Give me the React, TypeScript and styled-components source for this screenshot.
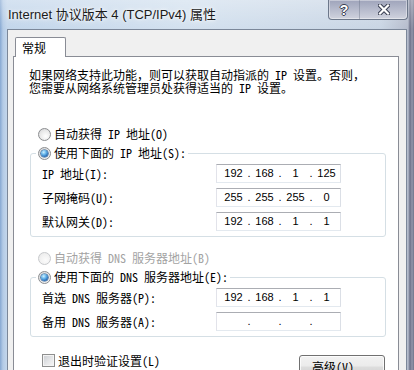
import React from "react";
import styled, { createGlobalStyle } from "styled-components";

const GlobalStyle = createGlobalStyle`
  html, body {
    margin: 0;
    padding: 0;
  }
  body {
    width: 414px;
    height: 370px;
    overflow: hidden;
    background: #fff;
  }
`;

const uiFont = `"Noto Sans Mono CJK SC", "Noto Sans CJK SC", sans-serif`;

const Window = styled.div`
  width: 414px;
  height: 370px;
  display: flex;
  flex-direction: column;
  overflow: hidden;
  box-sizing: border-box;
  background: linear-gradient(
    90deg,
    #86a8d2 0px,
    #b4cbe6 3px,
    #c3d6eb 7px,
    #d3e1ef 45%,
    #c9d5e4 92%,
    #b5bccc 408px,
    #6b7088 410px,
    #9396aa 412px,
    #6f748a 414px
  );
  font-family: ${uiFont};
`;

const TitleBar = styled.header`
  height: 29px;
  flex: none;
  display: flex;
  align-items: flex-start;
  padding-left: 8px;
  background: linear-gradient(
    180deg,
    rgba(255, 255, 255, 0.3) 0%,
    rgba(255, 255, 255, 0.1) 65%,
    rgba(255, 255, 255, 0) 100%
  );
`;

const Title = styled.h1`
  margin: 0;
  padding-top: 7px;
  font: 400 13px/16px "Liberation Sans", "Noto Sans CJK SC", sans-serif;
  color: #1b1b1b;
  text-shadow: 0 0 6px rgba(255, 255, 255, 0.9), 0 0 3px #fff;
  white-space: nowrap;
`;

const Caption = styled.div`
  margin-left: auto;
  margin-right: 6px;
  display: flex;
  height: 20px;
  box-sizing: border-box;
  border: 1px solid #6c778a;
  border-top: none;
  border-radius: 0 0 4px 4px;
  background: linear-gradient(180deg, #9ea3ba 0%, #b9bdce 55%, #d0d3de 100%);
  box-shadow: inset 0 0 0 1px rgba(255, 255, 255, 0.4);
  overflow: hidden;
`;

const CaptionButton = styled.div<{ $wide?: boolean }>`
  width: ${(p) => (p.$wide ? 47 : 30)}px;
  display: flex;
  align-items: center;
  justify-content: center;
  border-left: ${(p) => (p.$wide ? "1px solid rgba(90, 100, 120, 0.35)" : "none")};
  font: 700 14px/1 "Liberation Sans", sans-serif;
  color: #fff;
  text-shadow: 1px 0 0 #3a3f52, -1px 0 0 #3a3f52, 0 1px 0 #3a3f52, 0 -1px 0 #3a3f52;
`;

const Client = styled.div`
  flex: 1;
  min-height: 0;
  margin: 0 7px;
  display: flex;
  flex-direction: column;
  padding: 7px 7px 0 5px;
  background: #f0f0f0;
  border: 1px solid #7b8799;
  border-bottom: none;
`;

const TabStrip = styled.div`
  display: flex;
  padding-left: 2px;
  flex: none;
`;

const Tab = styled.div`
  position: relative;
  z-index: 1;
  width: 51px;
  height: 20px;
  margin-bottom: -1px;
  box-sizing: border-box;
  padding-left: 6px;
  display: flex;
  align-items: center;
  background: #fff;
  border: 1px solid #898c95;
  border-bottom: none;
  border-radius: 2px 2px 0 0;
  font-size: 12px;
  color: #000;
`;

const Panel = styled.div`
  flex: 1;
  display: flex;
  flex-direction: column;
  background: #fff;
  border: 1px solid #898c95;
  padding: 11px 12px 0 15px;
  font-size: 12px;
  color: #000;
`;

const Intro = styled.p`
  margin: 0;
  font-size: 12px;
  line-height: 13px;
  white-space: nowrap;
`;

const RadioRow = styled.label<{ $disabled?: boolean; $gap?: number; $inset?: number }>`
  display: flex;
  align-items: center;
  gap: 3px;
  height: 16px;
  margin-top: ${(p) => p.$gap ?? 0}px;
  padding-left: ${(p) => p.$inset ?? 0}px;
  font-size: 12px;
  line-height: 16px;
  white-space: nowrap;
  color: ${(p) => (p.$disabled ? "#a3a3a3" : "#000")};
`;

const RadioDot = styled.span<{ $checked?: boolean; $disabled?: boolean }>`
  flex: none;
  width: 13px;
  height: 13px;
  box-sizing: border-box;
  border-radius: 50%;
  border: 1px solid ${(p) => (p.$disabled ? "#c7c9cc" : "#8b8d90")};
  background: ${(p) =>
    p.$disabled
      ? "radial-gradient(circle at 60% 65%, #fbfbfb 0%, #f0f0f0 60%, #e6e6e6 100%)"
      : "radial-gradient(circle at 60% 65%, #ffffff 0%, #e9e9e9 55%, #cfd0d2 100%)"};
  display: grid;
  place-items: center;
  &::after {
    content: "";
    display: ${(p) => (p.$checked ? "block" : "none")};
    width: 7px;
    height: 7px;
    border-radius: 50%;
    background: radial-gradient(circle at 38% 32%, #d2f1ff 0%, #6ab8ec 35%, #2a6fb8 70%, #17467f 100%);
    box-shadow: 0 0 0 0.6px #1d4f86;
  }
`;

const Group = styled.fieldset<{ $gap?: number }>`
  margin: ${(p) => p.$gap ?? 3}px 0 0 1px;
  padding: 0;
  min-width: 0;
  border: 1px solid #d5dfe5;
  border-radius: 3px;
`;

const Legend = styled.legend`
  margin-left: 5px;
  padding: 0 2px;
`;

const Rows = styled.div`
  display: flex;
  flex-direction: column;
  gap: 5px;
  padding: 3px 0 5px 11px;
`;

const FieldRow = styled.div`
  display: flex;
  align-items: center;
  height: 19px;
`;

const FieldLabel = styled.span`
  width: 174px;
  font-size: 12px;
  white-space: nowrap;
`;

const IpBox = styled.div`
  width: 125px;
  height: 19px;
  box-sizing: border-box;
  display: flex;
  align-items: center;
  padding-left: 3px;
  background: #fff;
  border: 1px solid;
  border-color: #abadb3 #dbdfe6 #e3e9ef #e2e3ea;
  font: 11px/17px "Liberation Sans", sans-serif;
  color: #000;
`;

const Octet = styled.span`
  width: 27px;
  text-align: center;
`;

const Dot = styled.span`
  width: 4px;
  text-align: center;
`;

const Footer = styled.div`
  display: flex;
  justify-content: space-between;
  align-items: flex-start;
  margin-top: 15px;
  padding-right: 1px;
`;

const CheckRow = styled.label`
  display: flex;
  align-items: center;
  gap: 3px;
  height: 16px;
  padding-left: 13px;
  font-size: 12px;
  white-space: nowrap;
`;

const CheckBox = styled.span`
  flex: none;
  width: 13px;
  height: 13px;
  box-sizing: border-box;
  border: 1px solid #8e8f8f;
  background: linear-gradient(135deg, #c9ccd1 0%, #e6e7e9 55%, #f7f7f7 100%);
  box-shadow: inset 0 0 0 1px #f4f4f4;
`;

const Button = styled.button`
  margin-top: 3px;
  width: 86px;
  height: 23px;
  padding: 0;
  border: 1px solid #707070;
  border-radius: 3px;
  background: linear-gradient(180deg, #f2f2f2 0%, #ebebeb 48%, #dddddd 52%, #cfcfcf 100%);
  box-shadow: inset 0 0 0 1px rgba(255, 255, 255, 0.75);
  font: 12px/21px ${uiFont};
  color: #000;
`;

const CloseGlyph = () => (
  <svg width="12" height="11" viewBox="0 0 12 11">
    <path d="M2 1.5 L10 9.5 M10 1.5 L2 9.5" stroke="#3a3f52" strokeWidth="4.2" strokeLinecap="square" />
    <path d="M2 1.5 L10 9.5 M10 1.5 L2 9.5" stroke="#ffffff" strokeWidth="2.2" strokeLinecap="square" />
  </svg>
);

const IpField = ({ value }: { value?: string[] }) => {
  const parts = value ?? ["", "", "", ""];
  return (
    <IpBox>
      {parts.map((part, i) => (
        <React.Fragment key={i}>
          {i > 0 && <Dot>.</Dot>}
          <Octet>{part}</Octet>
        </React.Fragment>
      ))}
    </IpBox>
  );
};

const ipRows = [
  { label: "IP 地址(I):", value: ["192", "168", "1", "125"] },
  { label: "子网掩码(U):", value: ["255", "255", "255", "0"] },
  { label: "默认网关(D):", value: ["192", "168", "1", "1"] },
];

const dnsRows = [
  { label: "首选 DNS 服务器(P):", value: ["192", "168", "1", "1"] },
  { label: "备用 DNS 服务器(A):", value: undefined },
];

export default function App() {
  return (
    <>
      <GlobalStyle />
      <Window>
        <TitleBar>
          <Title>Internet 协议版本 4 (TCP/IPv4) 属性</Title>
          <Caption>
            <CaptionButton>?</CaptionButton>
            <CaptionButton $wide>
              <CloseGlyph />
            </CaptionButton>
          </Caption>
        </TitleBar>
        <Client>
          <TabStrip>
            <Tab>常规</Tab>
          </TabStrip>
          <Panel>
            <Intro>
              如果网络支持此功能，则可以获取自动指派的 IP 设置。否则，
              <br />
              您需要从网络系统管理员处获得适当的 IP 设置。
            </Intro>

            <RadioRow $gap={32} $inset={9}>
              <RadioDot />
              自动获得 IP 地址(O)
            </RadioRow>
            <Group>
              <Legend>
                <RadioRow>
                  <RadioDot $checked />
                  使用下面的 IP 地址(S):
                </RadioRow>
              </Legend>
              <Rows>
                {ipRows.map((row) => (
                  <FieldRow key={row.label}>
                    <FieldLabel>{row.label}</FieldLabel>
                    <IpField value={row.value} />
                  </FieldRow>
                ))}
              </Rows>
            </Group>

            <RadioRow $gap={13} $inset={9} $disabled>
              <RadioDot $disabled />
              自动获得 DNS 服务器地址(B)
            </RadioRow>
            <Group>
              <Legend>
                <RadioRow>
                  <RadioDot $checked />
                  使用下面的 DNS 服务器地址(E):
                </RadioRow>
              </Legend>
              <Rows>
                {dnsRows.map((row) => (
                  <FieldRow key={row.label}>
                    <FieldLabel>{row.label}</FieldLabel>
                    <IpField value={row.value} />
                  </FieldRow>
                ))}
              </Rows>
            </Group>

            <Footer>
              <CheckRow>
                <CheckBox />
                退出时验证设置(L)
              </CheckRow>
              <Button>高级(V)...</Button>
            </Footer>
          </Panel>
        </Client>
      </Window>
    </>
  );
}
